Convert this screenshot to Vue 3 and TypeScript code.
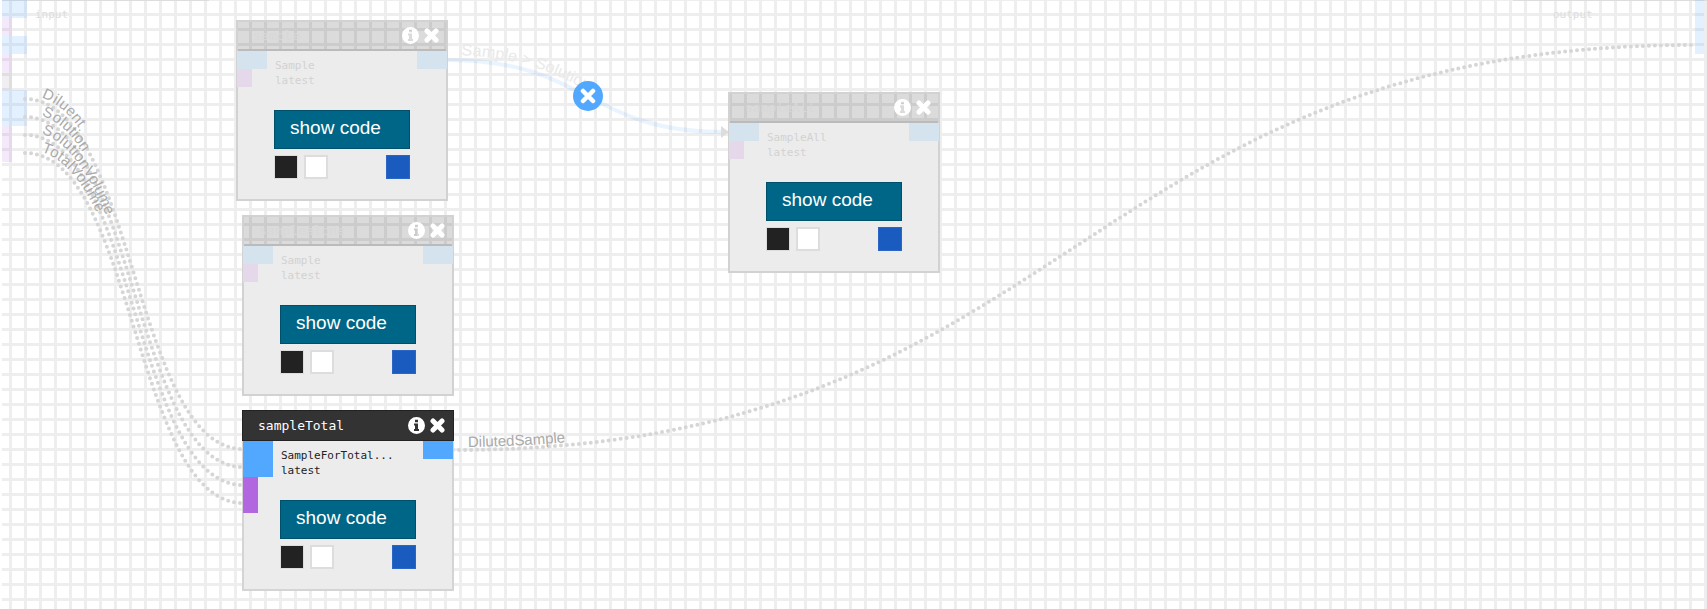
<template>
  <div class="canvas">
    <div class="io-panel io-panel--input">input</div>
    <div class="io-panel io-panel--output">output</div>

    <span
      v-for="(port, i) in graphPorts"
      :key="i"
      class="graph-port"
      :class="`is-${port.kind}`"
      :style="{ left: port.x + 'px', top: port.y + 'px', width: port.w + 'px', height: port.h + 'px' }"
    />

    <svg class="edges" width="1707" height="609">
      <defs>
        <path
          v-for="edge in edges"
          :id="edge.id"
          :key="edge.id"
          :d="edge.d"
        />
      </defs>
      <g v-for="edge in edges" :key="edge.id">
        <use
          :href="`#${edge.id}`"
          :class="edge.faint ? 'edge-solid' : 'edge-dotted'"
        />
        <text :class="edge.faint ? 'edge-label is-faint' : 'edge-label'" :dy="edge.dy">
          <textPath :href="`#${edge.id}`" :startOffset="edge.offset">{{ edge.label }}</textPath>
        </text>
      </g>
      <polygon class="edge-arrow" points="721,126 729,132 721,138" />
    </svg>

    <button class="edge-remove" type="button" aria-label="remove edge">
      <svg width="16" height="16" viewBox="0 0 16 16">
        <path d="M3 3 13 13M13 3 3 13" />
      </svg>
    </button>

    <div
      v-for="card in cards"
      :key="card.id"
      class="card"
      :class="{ 'is-active': card.active }"
      :style="{ left: card.x + 'px', top: card.y + 'px' }"
    >
      <div class="card__header">
        <span class="card__title">{{ card.title }}</span>
        <svg class="card__info" width="17" height="17" viewBox="0 0 17 17">
          <path
            fill-rule="evenodd"
            d="M8.5 0a8.5 8.5 0 1 0 0 17a8.5 8.5 0 0 0 0-17ZM7 2.800h3v2.500H7ZM6 6.600h4v5.500h1v2H6v-2h1V8.600H6Z"
          />
        </svg>
        <svg class="card__close" width="15" height="15" viewBox="0 0 15 15">
          <path d="M3 3 12 12M12 3 3 12" />
        </svg>
      </div>
      <div class="card__body">
        <span class="card__port card__port--in" />
        <span class="card__port card__port--param" />
        <span class="card__port card__port--out" />
        <div class="card__meta">
          {{ card.kind }}<br>latest
        </div>
        <button class="card__code" type="button">show code</button>
        <div class="card__swatches">
          <span class="swatch swatch--black" />
          <span class="swatch swatch--white" />
          <span class="swatch swatch--blue" />
        </div>
      </div>
    </div>
  </div>
</template>

<script setup lang="ts">
type PortKind = 'blue' | 'purple' | 'grey';

const graphPorts: { kind: PortKind; x: number; y: number; w: number; h: number }[] = [
  { kind: 'blue', x: 2, y: 0, w: 25, h: 18 },
  { kind: 'purple', x: 2, y: 18, w: 10, h: 18 },
  { kind: 'blue', x: 2, y: 36, w: 25, h: 18 },
  { kind: 'purple', x: 2, y: 54, w: 10, h: 18 },
  { kind: 'grey', x: 2, y: 72, w: 10, h: 18 },
  { kind: 'blue', x: 2, y: 90, w: 25, h: 36 },
  { kind: 'purple', x: 2, y: 126, w: 10, h: 36 },
  { kind: 'blue', x: 1695, y: 0, w: 9, h: 54 },
];

const edges = [
  { id: 'e-sample', d: 'M447 60C588 60 588 132 722 132', label: 'Sample > Solution', offset: 14, dy: -5, faint: true },
  { id: 'e-diluted', d: 'M453 450C1074 450 1074 45 1695 45', label: 'DilutedSample', offset: 15, dy: -3, faint: false },
  { id: 'e-diluent', d: 'M25 99C134 99 134 449 243 449', label: 'Diluent', offset: 15, dy: -4, faint: false },
  { id: 'e-solution', d: 'M25 117C134 117 134 467 243 467', label: 'Solution', offset: 15, dy: -4, faint: false },
  { id: 'e-volume', d: 'M25 135C134 135 134 485 243 485', label: 'SolutionVolume', offset: 15, dy: -4, faint: false },
  { id: 'e-total', d: 'M25 153C134 153 134 503 243 503', label: 'TotalVolume', offset: 15, dy: -4, faint: false },
];

const cards = [
  { id: 1, x: 236, y: 20, title: 'sample', kind: 'Sample', active: false },
  { id: 2, x: 242, y: 215, title: 'samplealone', kind: 'Sample', active: false },
  { id: 3, x: 242, y: 410, title: 'sampleTotal', kind: 'SampleForTotal...', active: true },
  { id: 4, x: 728, y: 92, title: 'sampleAll', kind: 'SampleAll', active: false },
];
</script>

<style>
html,
body {
  margin: 0;
  background: #fff;
}
</style>

<style scoped>
.canvas {
  position: relative;
  box-sizing: border-box;
  width: 1707px;
  height: 609px;
  overflow: hidden;
  border-left: 2px solid #fff;
  background-color: #fff;
  background-image:
    linear-gradient(to right, #eee 3px, transparent 3px),
    linear-gradient(to bottom, #eee 3px, transparent 3px);
  background-position: 7px 0, 0 13px;
  background-size: 15px 15px;
  font-family: "Liberation Sans", Arial, sans-serif;
}

.io-panel {
  position: absolute;
  top: 0;
  box-sizing: border-box;
  height: 24px;
  padding-top: 7px;
  border-top: 1px solid #ddd;
  color: #ddd;
  font: 11px/13px "DejaVu Sans Mono", monospace;
}

.io-panel--input {
  left: -2px;
  width: 209px;
  padding-left: 35px;
}

.io-panel--output {
  left: 1511px;
  width: 194px;
  padding-left: 40px;
}

.graph-port {
  position: absolute;
  margin-left: -2px;
}

.graph-port.is-blue {
  background: rgba(82, 168, 255, 0.17);
}

.graph-port.is-purple {
  background: rgba(178, 102, 224, 0.14);
}

.graph-port.is-grey {
  background: rgba(120, 90, 130, 0.1);
}

.edges {
  position: absolute;
  top: 0;
  left: -2px;
}

.edge-solid {
  fill: none;
  stroke: rgba(82, 168, 255, 0.12);
  stroke-width: 4;
}

.edge-dotted {
  fill: none;
  stroke: #d6d6d6;
  stroke-width: 4;
  stroke-linecap: round;
  stroke-dasharray: 0 6;
}

.edge-label {
  fill: #aaa;
  font-size: 15px;
}

.edge-label.is-faint {
  fill: #e9e9e9;
  font-size: 16px;
}

.edge-arrow {
  fill: #ddd;
}

.edge-remove {
  position: absolute;
  top: 81px;
  left: 571px;
  display: flex;
  align-items: center;
  justify-content: center;
  width: 30px;
  height: 30px;
  padding: 0;
  border: 0;
  border-radius: 50%;
  background: #52a8ff;
}

.edge-remove path {
  fill: none;
  stroke: #fff;
  stroke-width: 4.5;
  stroke-linecap: round;
}

.card {
  position: absolute;
  box-sizing: border-box;
  display: flex;
  flex-direction: column;
  width: 212px;
  height: 181px;
  margin-left: -2px;
  border: 2px solid #d2d2d2;
}

.card__header {
  display: flex;
  flex: 0 0 29px;
  align-items: center;
  box-sizing: border-box;
  padding: 0 4px 0 15px;
  border-bottom: 2px solid #bbb;
  background: rgba(0, 0, 0, 0.14);
}

.card__title {
  flex: 1;
  color: #d8d8d8;
  font: 13px/15px "DejaVu Sans Mono", monospace;
}

.card__info {
  margin-right: 5px;
  fill: #fff;
}

.card__close {
  margin-right: 3px;
}

.card__close path {
  fill: none;
  stroke: #fff;
  stroke-width: 5;
  stroke-linecap: round;
}

.card__body {
  position: relative;
  flex: 1;
  padding: 7px 0 0 36px;
  background: #ececec;
}

.card__port {
  position: absolute;
}

.card__port--in {
  top: 0;
  left: -1px;
  width: 30px;
  height: 18px;
  background: #d5e3ef;
}

.card__port--param {
  top: 18px;
  left: -1px;
  width: 15px;
  height: 18px;
  background: #e4d8ea;
}

.card__port--out {
  top: 0;
  right: -1px;
  width: 30px;
  height: 18px;
  background: #d5e3ef;
}

.card__meta {
  height: 30px;
  padding-left: 1px;
  color: #d2d2d2;
  font: 11px/15px "DejaVu Sans Mono", monospace;
}

.card__code {
  display: block;
  box-sizing: border-box;
  width: 136px;
  height: 39px;
  margin-top: 22px;
  padding: 0 0 3px 15px;
  border: 1px solid #004f6b;
  background: #006687;
  color: #fff;
  font: 19px/34px "Liberation Sans", Arial, sans-serif;
  text-align: left;
}

.card__swatches {
  display: flex;
  gap: 6px;
  width: 136px;
  margin-top: 6px;
}

.swatch {
  box-sizing: border-box;
  width: 24px;
  height: 24px;
  border: 1px solid #ddd;
}

.swatch--black {
  background: #222;
}

.swatch--white {
  border-width: 2px;
  background: #fff;
}

.swatch--blue {
  margin-left: auto;
  border-color: #2c66c4;
  background: #1a5bbf;
}

.card.is-active {
  border-color: #d4d4d4;
}

.card.is-active .card__header {
  flex-basis: 31px;
  margin: -2px -2px 0;
  border: 1px solid #222;
  padding-right: 5px;
  background: #333;
}

.card.is-active .card__title {
  color: #fff;
}

.card.is-active .card__meta {
  color: #222;
}

.card.is-active .card__port--in {
  height: 36px;
  background: #52a8ff;
}

.card.is-active .card__port--param {
  top: 36px;
  height: 36px;
  background: #b266e0;
}

.card.is-active .card__port--out {
  background: #52a8ff;
}
</style>
